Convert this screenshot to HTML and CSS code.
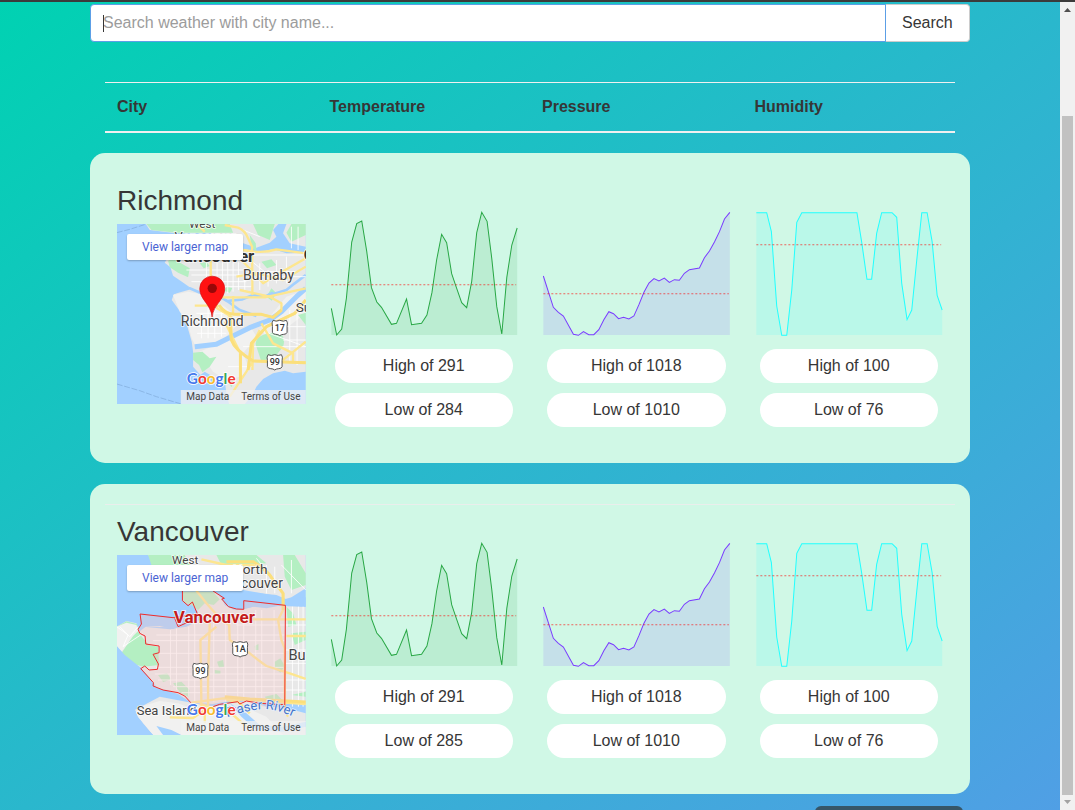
FILE: index.html
```html
<!DOCTYPE html>
<html lang="en">
<head>
<meta charset="utf-8">
<meta name="viewport" content="width=device-width, initial-scale=1">
<title>Weather</title>
<link rel="stylesheet" href="styles.css">
</head>
<body>
<svg class="defs" width="0" height="0" aria-hidden="true">
  <defs>
    <g id="temp">
      <path class="area" d="M34 405V325L50 405L65 387L79 295L95 126L110 71L125 63L140 155L154 263L170 306L184 322L214 373L229 370L259 297L274 374L304 370L320 345L335 278L349 180L364 103L379 128L394 221L408 262L424 308L439 323L454 244L469 98L484 37L500 64L514 175L529 320L544 402L559 232L574 135L590 84V405Z"/>
      <path class="line" d="M34 325L50 405L65 387L79 295L95 126L110 71L125 63L140 155L154 263L170 306L184 322L214 373L229 370L259 297L274 374L304 370L320 345L335 278L349 180L364 103L379 128L394 221L408 262L424 308L439 323L454 244L469 98L484 37L500 64L514 175L529 320L544 402L559 232L574 135L590 84"/>
      <path class="mean" d="M34 254.500H587"/>
    </g>
    <g id="pressure">
      <path class="area" d="M26 405V228L56 322L71 337L86 348L116 403L131 406L146 395L162 404L177 404L192 389L207 359L222 335L236 341L251 356L266 352L282 357L297 348L312 314L327 277L342 249L357 236L372 243L388 234L403 247L418 239L433 241L448 220L463 209L493 204L508 173L523 153L538 126L553 95L568 57L584 37V405Z"/>
      <path class="line" d="M26 228L56 322L71 337L86 348L116 403L131 406L146 395L162 404L177 404L192 389L207 359L222 335L236 341L251 356L266 352L282 357L297 348L312 314L327 277L342 249L357 236L372 243L388 234L403 247L418 239L433 241L448 220L463 209L493 204L508 173L523 153L538 126L553 95L568 57L584 37"/>
      <path class="mean" d="M26 281H581"/>
    </g>
    <g id="humidity">
      <path class="area" d="M34 405V38H65L79 95L95 318L110 406H125L140 270L155 67L170 38H335L349 125L365 238H379L394 100L409 38H440L454 52L469 250L485 359L499 330L514 180L529 38H545L560 125L575 286L590 330V405Z"/>
      <path class="line" d="M34 38H65L79 95L95 318L110 406H125L140 270L155 67L170 38H335L349 125L365 238H379L394 100L409 38H440L454 52L469 250L485 359L499 330L514 180L529 38H545L560 125L575 286L590 330"/>
      <path class="mean" d="M34 134H587"/>
    </g>
    <path id="shield" d="M-20 -22Q-11 -17 0 -22Q11 -17 20 -22Q25 -16 22 -4V14Q20 20 12 20Q5 20 0 24Q-5 20 -12 20Q-20 20 -22 14V-4Q-25 -16 -20 -22Z"/>
  </defs>
</svg>
<div class="shell">
  <main class="page">
    <div class="container">
      <form class="search">
        <div class="field">
          <input class="search-input" type="text" aria-label="Search weather with city name..." placeholder="Search weather with city name...">
          <span class="caret"></span>
        </div>
        <button class="search-button" type="button">Search</button>
      </form>

      <table class="columns">
        <thead>
          <tr><th scope="col">City</th><th scope="col">Temperature</th><th scope="col">Pressure</th><th scope="col">Humidity</th></tr>
        </thead>
      </table>

      <section class="card">
        <table class="readings">
          <tbody>
            <tr>
              <td>
                <h2 class="city">Richmond</h2>
                <div class="map">
                  <svg class="map-art" viewBox="21 132 567 540" preserveAspectRatio="xMidYMid slice">
                    <rect class="water" x="21" y="132" width="567" height="540"/>
                    <path class="border" d="M21 158L60 148L110 132M21 612L90 632L140 650L215 672"/>
                    <path class="land" d="M108 132L120 150L150 154L200 160H300L400 190L440 203L480 188L500 170L490 150L506 132Z"/>
                    <path class="wood" d="M110 132L125 150L200 158H370L360 132ZM430 132L445 165L480 180L495 132Z"/>
                    <path class="land" d="M530 132L520 160L540 190L588 200V132Z"/>
                    <path class="wood" d="M545 132L530 158L545 185L588 165V132Z"/>
                    <path class="land" d="M165 248L175 230L260 225L300 245L325 228L390 225L405 208L450 217L490 207L530 220L588 218V575L550 580L525 572L490 580L460 597L440 620L428 645L405 672H358L350 640L346 610L310 590L285 575L272 585L250 560L250 515L246 485L230 430L215 400L186 360L192 343L240 322L212 302L190 287L182 262Z"/>
                    <path class="sand" d="M190 345L235 335L290 345L345 380L395 420L345 475L260 505L246 475L233 425L210 395ZM270 515L350 480L425 445L440 470L400 520L420 570L390 590L350 600L310 575ZM530 350L588 330V400L535 440L470 480L455 440Z"/>
                    <path class="wood" d="M175 242L190 236L240 265L235 292L205 278L180 262ZM270 250L290 246L300 258L282 265ZM420 165L438 190L440 215L425 200ZM455 245L485 238L500 255L472 265ZM350 320L368 324L360 338L345 333ZM470 350L485 325L500 340L486 362ZM440 500Q430 475 465 463L505 455Q530 470 520 500L500 525L455 545ZM250 518L278 515L300 535L320 530L300 560L278 577L268 555L250 540ZM355 605L375 600L365 622ZM565 405L588 398V435Z"/>
                    <path class="river" d="M192 338L240 325L292 347L320 343L352 363L398 358L430 345L465 350L490 338M465 350L530 330L555 310L588 285M352 363L390 390L440 408"/>
                    <path class="river wide" d="M255 500L320 493L365 470L420 443L480 420L515 395L560 350L588 325"/>
                    <path class="minor" d="M230 270H400M245 285H420M245 305H410M290 248V325M322 235V340M338 235V335M354 240V340M370 240V335M386 245V330M405 270V330M425 260V320M450 250V330M475 270V320M500 240V310M530 230V310M430 290H588M450 275H560M310 320H430M400 225H588M260 400H350M260 420H355M250 440H360M262 460H350M275 400V475M295 385V475M315 385V475M335 385V470M355 560H430M450 450L588 500M540 390V550M562 390V555M520 440H588M520 480H588M400 500H588M415 235L470 280M545 140V205M565 140V210M400 150L450 170"/>
                    <path class="road" d="M260 132L285 155M345 135L385 143Q405 150 415 175L427 200L428 345M400 210Q460 222 500 208L588 220M303 240V320M322 345V385L365 410V480M322 352H465L588 325M328 375Q345 402 375 403H455L490 412L515 390V370L480 350L390 330M370 348V400M255 377H310V350M395 240Q430 275 460 310L500 285L588 235M380 290L440 280L520 300L588 260M358 410L365 480Q375 510 430 543L588 548M455 430L490 490L550 520V546M430 543L410 575L360 650M415 570L425 490L470 440L555 400L588 360M392 520V610M450 450L430 490L428 570M510 548L588 485M345 425L392 520"/>
                    <path class="road-core" d="M328 375Q345 402 375 403H455L490 412L515 390M358 410L365 480Q375 510 430 543L588 548M415 570L425 490L470 440L555 400L588 360M392 520V610"/>
                    <rect class="legal-bg" x="213" y="630" width="375" height="42"/>
                    <g class="label"><text x="238" y="144" font-size="35">West</text><text x="194" y="184" font-size="39">Vancouver</text><text class="strong" x="190" y="245" font-size="51">Vancouver</text><text x="400" y="300" font-size="42">Burnaby</text><text x="213" y="438" font-size="42">Richmond</text><text x="558" y="395" font-size="41">Surrey</text><text class="strong" x="582" y="240" font-size="44">C</text></g>
                    <g class="route" transform="translate(510 443)"><use href="#shield"/><text y="11">17</text></g>
                    <g class="route" transform="translate(495 546)"><use href="#shield"/><text y="10">99</text></g>
                    <path class="pin" d="M307 411C304 373 270 359 270 326A37.500 37.500 0 0 1 345 326C345 359 311 373 307 411Z"/>
                    <circle class="pin-dot" cx="307.500" cy="325" r="14"/>
                    <text class="google" x="231" y="611"><tspan class="g-blue">G</tspan><tspan class="g-red">o</tspan><tspan class="g-yellow">o</tspan><tspan class="g-blue">g</tspan><tspan class="g-green">l</tspan><tspan class="g-red">e</tspan></text>
                  </svg>
                  <a class="map-link" href="#">View larger map</a>
                  <div class="legal"><a href="#">Map Data</a><a href="#">Terms of Use</a></div>
                </div>
              </td>
              <td>
                <svg class="chart green" viewBox="30 27 564 390" preserveAspectRatio="none"><use href="#temp"/></svg>
                <div class="pill">High of 291</div>
                <div class="pill">Low of 284</div>
              </td>
              <td>
                <svg class="chart purple" viewBox="22 27 564 390" preserveAspectRatio="none"><use href="#pressure"/></svg>
                <div class="pill">High of 1018</div>
                <div class="pill">Low of 1010</div>
              </td>
              <td>
                <svg class="chart cyan" viewBox="30 27 564 390" preserveAspectRatio="none"><use href="#humidity"/></svg>
                <div class="pill">High of 100</div>
                <div class="pill">Low of 76</div>
              </td>
            </tr>
          </tbody>
        </table>
      </section>

      <section class="card">
        <table class="readings ruled">
          <tbody>
            <tr>
              <td>
                <h2 class="city">Vancouver</h2>
                <div class="map">
                  <svg class="map-art" viewBox="21 135 567 540" preserveAspectRatio="xMidYMid slice">
                    <rect class="water" x="21" y="135" width="567" height="540"/>
                    <path class="land" d="M115 135L135 165H390L400 240L440 247L500 258L525 268L545 262L588 235V135Z"/>
                    <path class="wood" d="M115 135L125 165H240L225 135ZM320 135L335 165H400L470 160L440 135ZM520 135L525 200L545 240L588 225V190L555 135Z"/>
                    <path class="land" d="M21 350L50 333L80 340L88 365L108 350L150 348L190 357L215 345L250 330L265 305L250 285L222 278L218 245H315L335 265L345 285L372 297L400 298L430 290L470 295L505 288L588 290V675H130L100 640L75 600L150 560L245 578L205 552L130 530L95 475L60 455L40 430L21 410Z"/>
                    <path class="sand" d="M75 610L100 588L150 573L205 580L250 597L340 600L420 598L470 620L520 675H130L110 650Z"/>
                    <path class="wood" d="M21 350L50 334L82 342L85 365L100 385L118 405L145 410L148 465L100 470L60 458L35 430L55 400L40 375ZM218 245H310L330 268L312 285L285 280L265 300L245 285L222 277ZM145 495L172 490L185 508L160 516ZM190 520L215 515L240 540L238 562L212 548ZM322 455L340 450L343 470L328 474ZM435 408L446 402L446 420L436 420ZM495 455L512 445L525 468L512 488L495 475ZM530 290L550 310L560 345L535 350ZM465 560L500 552L520 572L480 580ZM545 370L588 365V390L555 405ZM545 555L588 545V560ZM315 480L332 482V492H315Z"/>
                    <path class="sand" d="M21 350L50 338L80 345L86 362L70 378L55 400L35 425L21 408Z"/>
                    <path class="water" d="M430 290L505 285L588 290V262L530 268L500 255L400 245L380 250L345 285L372 299L400 298ZM102 350L205 352L240 333L263 312L280 325L230 350L180 358ZM21 408L45 435L95 475L140 530L112 545L75 598L90 635L130 675H21Z"/>
                    <path class="water" d="M245 578L310 590L360 580L420 572L470 590L520 592L588 610V585L520 580L420 565L360 573L310 582ZM360 580L410 610L450 645L520 650L588 635V650L520 665L440 660L395 620ZM140 648L185 660L215 675H160Z"/>
                    <path class="minor" d="M140 375H525M130 392H525M150 430H525M140 472H525M135 492H525M145 510H525M190 530H525M215 548H525M182 360V525M200 355V540M237 350V560M255 340V580M312 340V575M348 330V575M384 330V572M402 310V575M438 300V576M456 300V578M493 300V580M548 290V590M566 290V590M580 290V590M380 345H588M525 420H588M525 460H588M525 510H588M525 540H588M355 170L400 200M470 165V250M495 170V250M515 165L588 240M440 145L500 220M545 150V250M30 350L60 380L85 350M21 350L55 375L40 410L100 370"/>
                    <path class="road" d="M275 148L350 165H430Q475 180 490 210L520 250V300L505 330L515 390L525 415V592M260 242L290 280L330 325L358 345L360 390L420 430Q445 450 470 468L540 490L588 507M275 590L272 390L320 350M295 590V500L300 340M380 328H588M530 378H588M245 578L340 565L420 570L588 582M350 570L385 575L420 610M270 580L310 595L370 615L410 650"/>
                    <path class="road-core" d="M350 155H430Q475 180 490 210L520 250V300M345 560L420 567L588 576"/>
                    <path class="road" d="M180 622L250 624L285 600V640M520 592L535 620"/>
                    <path class="region" d="M91 312L190 323L210 320L263 312L248 285L235 287L218 272V245H315L336 260L340 270L355 290L370 297L402 298V272L527 286V600L450 588L410 575L350 573L310 592L243 578L205 552L130 528L131 518L95 478L105 468L118 478H143L146 465L130 435L148 428V408H108V385L88 368L85 358L95 342Z"/>
                    <path class="outline" d="M218 240V272L235 287L248 276L263 312L210 320L190 323L91 312L95 342L85 358L90 370L106 378L108 402L148 408V428L130 433L146 462L143 478L118 480L105 468L93 476L131 518L130 528L160 540L205 548L225 558L243 578M195 325L205 350L240 334M310 243L344 265L336 267L356 290L380 297L402 298V272L527 286L525 592M310 590L330 583L384 575L390 582L410 573L450 580L520 584"/>
                    <rect class="legal-bg" x="213" y="633" width="375" height="42"/>
                    <g class="label"><text x="187" y="162" font-size="35">West</text><text x="370" y="191" font-size="41">North</text><text x="322" y="234" font-size="42">Vancouver</text><text class="district" x="192" y="339" font-size="51">Vancouver</text><text x="536" y="451" font-size="44">Burnaby</text><text x="81" y="615" font-size="39">Sea Island</text></g>
                    <path id="river-line" class="hidden-line" d="M352 622Q440 590 490 600Q530 608 590 640"/>
                    <text class="river-name" font-size="39"><textPath href="#river-line">Fraser River</textPath></text>
                    <g class="route" transform="translate(391 417)"><use href="#shield"/><text y="10">1A</text></g>
                    <g class="route" transform="translate(272 482)"><use href="#shield"/><text y="10">99</text></g>
                    <text class="google" x="231" y="614"><tspan class="g-blue">G</tspan><tspan class="g-red">o</tspan><tspan class="g-yellow">o</tspan><tspan class="g-blue">g</tspan><tspan class="g-green">l</tspan><tspan class="g-red">e</tspan></text>
                  </svg>
                  <a class="map-link" href="#">View larger map</a>
                  <div class="legal"><a href="#">Map Data</a><a href="#">Terms of Use</a></div>
                </div>
              </td>
              <td>
                <svg class="chart green" viewBox="30 27 564 390" preserveAspectRatio="none"><use href="#temp"/></svg>
                <div class="pill">High of 291</div>
                <div class="pill">Low of 285</div>
              </td>
              <td>
                <svg class="chart purple" viewBox="22 27 564 390" preserveAspectRatio="none"><use href="#pressure"/></svg>
                <div class="pill">High of 1018</div>
                <div class="pill">Low of 1010</div>
              </td>
              <td>
                <svg class="chart cyan" viewBox="30 27 564 390" preserveAspectRatio="none"><use href="#humidity"/></svg>
                <div class="pill">High of 100</div>
                <div class="pill">Low of 76</div>
              </td>
            </tr>
          </tbody>
        </table>
      </section>
      <div class="toast"></div>
    </div>
  </main>
  <div class="scrollbar">
    <svg class="arrow" viewBox="0 0 15 17"><path fill="#505050" d="M4 10L7.500 6L11 10Z"/></svg>
    <div class="track"><div class="thumb"></div></div>
    <svg class="arrow arrow-down" viewBox="0 0 15 15"><path fill="#a3a3a3" d="M4 5L7.500 9L11 5Z"/></svg>
  </div>
</div>
</body>
</html>
```
FILE: styles.css
```css
* { box-sizing: border-box; }
body {
  margin: 0;
  font-family: "Liberation Sans", Arial, sans-serif;
  font-size: 16px;
  line-height: 24px;
  color: #363636;
}
.defs { position: absolute; }
.shell {
  display: flex;
  height: 100vh;
  overflow: hidden;
  border-top: 2px solid #3b3b3b;
}
.page {
  flex: 1;
  min-width: 0;
  padding: 2px 20px 0;
  overflow: hidden;
  background: linear-gradient(to bottom right, #00d2b2, #27b9cb 47%, #509fe5);
}
.container { max-width: 880px; margin: 0 auto; }

.search { display: flex; margin: 0 0 40px; }
.field { position: relative; flex: 1; }
.search-input {
  display: block;
  width: 100%;
  height: 38px;
  padding: 0 12px;
  border: 1px solid #5c9fe6;
  border-radius: 4px 0 0 4px;
  background: #fff;
  color: #363636;
  font: inherit;
  outline: none;
}
.search-input::placeholder { color: #9c9c9c; opacity: 1; }
.caret {
  position: absolute;
  left: 13px;
  top: 11px;
  width: 1px;
  height: 17px;
  background: #363636;
}
.search-button {
  height: 38px;
  padding: 0 17px 0 16px;
  border: 1px solid #ccc;
  border-left: 0;
  border-radius: 0 4px 4px 0;
  background: #fff;
  color: #363636;
  font: inherit;
  width: 84px;
}

table { border-collapse: collapse; table-layout: fixed; }
.columns { width: calc(100% - 30px); margin: 0 15px 20px; border-collapse: separate; border-spacing: 0; }
.columns th {
  padding: 12px;
  border-top: 1px solid #f0f0f0;
  border-bottom: 2px solid #f0f0f0;
  text-align: left;
}

.card {
  margin-bottom: 21px;
  padding: 20px 15px 24px;
  border-radius: 15px;
  background: #d0f8e6;
}
.readings { width: 100%; }
.ruled { box-shadow: inset 0 1px #eaeeec; }
.readings td { padding: 12px; vertical-align: top; }
.city { margin: 0 0 7px; font-size: 28px; line-height: 32px; font-weight: 400; }

.chart { display: block; width: 100%; height: 130px; margin: 24px 0 10px; }
.area { fill: var(--tone); fill-opacity: .12; }
.line, .mean { fill: none; vector-effect: non-scaling-stroke; stroke-width: 1px; }
.line { stroke: var(--tone); }
.mean { stroke: #f00; stroke-opacity: .6; stroke-dasharray: 2 2; }
.green { --tone: #28a745; }
.purple { --tone: #7a3cff; }
.cyan { --tone: #20ffff; }
.pill {
  margin: 0 5px 10px;
  padding: 5px 0;
  border-radius: 17px;
  background: #fff;
  text-align: center;
}
.pill:last-child { margin-bottom: 0; }

.map { position: relative; height: 180px; overflow: hidden; font-family: Roboto, sans-serif; }
.map-art { display: block; width: 100%; height: 100%; }
.map-link {
  position: absolute;
  left: 10px;
  top: 10px;
  padding: 0 15px;
  border-radius: 2px;
  background: #fff;
  box-shadow: 0 1px 2px rgba(0, 0, 0, .25);
  color: #4a63d3;
  font-size: 12px;
  line-height: 26px;
  text-decoration: none;
}
.legal {
  position: absolute;
  right: 5px;
  bottom: 0;
  display: flex;
  gap: 12px;
  font-size: 10px;
  line-height: 14px;
}
.legal a { color: #444; text-decoration: none; }
.legal-bg { fill: #f1f1f1; fill-opacity: .75; }
.water { fill: #a2d0ff; }
.land { fill: #e8e8e8; }
.sand { fill: #f1f1f0; }
.wood { fill: #b4efc2; }
.border { fill: none; stroke: #7ea9d8; stroke-width: 2; stroke-dasharray: 18 5; }
.river { fill: none; stroke: #a2d0ff; stroke-width: 8; stroke-linejoin: round; }
.wide { stroke-width: 15; }
.minor { fill: none; stroke: #fff; stroke-width: 3; stroke-opacity: .85; }
.road { fill: none; stroke: #fde68f; stroke-width: 7; stroke-linejoin: round; }
.road-core { fill: none; stroke: #fbdf7c; stroke-width: 9; stroke-linejoin: round; }
.region { fill: #f3c6c6; fill-opacity: .35; }
.outline { fill: none; stroke: #ee2c2c; stroke-width: 3; }
.label text { fill: #444; stroke: #fff; stroke-width: 5; stroke-opacity: .8; paint-order: stroke; }
.label .strong { font-weight: 700; fill: #333; }
.label .district { font-weight: 700; fill: #c41c1c; }
.hidden-line { fill: none; }
.river-name { fill: #4472c8; stroke: #e8f3ff; stroke-width: 4; paint-order: stroke; }
.route use { fill: #fff; stroke: #555; stroke-width: 3; }
.route text { fill: #333; font-size: 27px; text-anchor: middle; font-weight: 500; }
.pin { fill: #ff1212; stroke: #d41414; stroke-width: 2; }
.pin-dot { fill: #980808; }
.google { font-family: Lato, sans-serif; font-size: 46px; font-weight: 700; stroke: #fff; stroke-width: 5; paint-order: stroke; }
.g-blue { fill: #4579ec; }
.g-red { fill: #f03a32; }
.g-yellow { fill: #f9bb2d; }
.g-green { fill: #3aa757; }

.toast {
  width: 148px;
  height: 40px;
  margin: -9px 7px 0 auto;
  border-radius: 6px;
  background: #365668;
}

.scrollbar { display: flex; flex-direction: column; width: 15px; background: #f1f1f1; }
.arrow { width: 15px; height: 17px; }
.arrow-down { height: 15px; }
.track { display: flex; flex: 1; padding: 97px 2px 0; }
.thumb { flex: 1; background: #c1c1c1; }
```
